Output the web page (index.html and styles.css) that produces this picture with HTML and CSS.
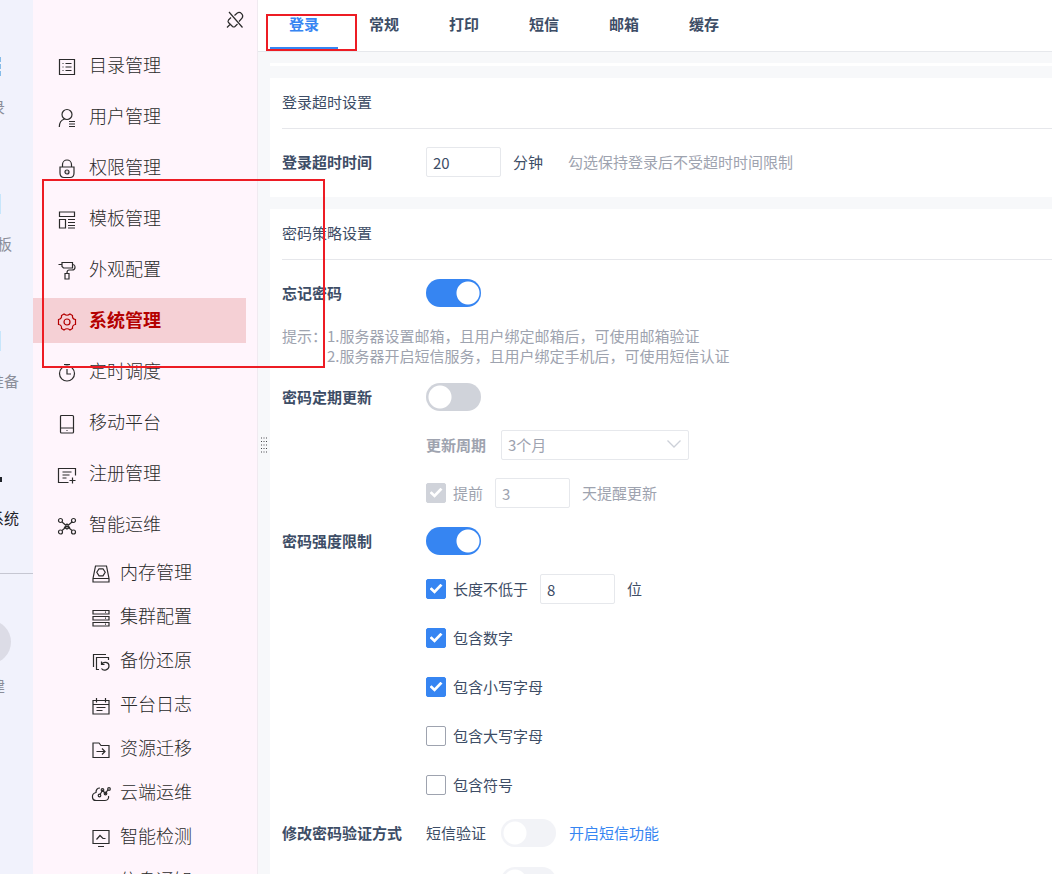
FILE: index.html
```
<!DOCTYPE html>
<html lang="zh-CN">
<head>
<meta charset="utf-8">
<title>系统管理</title>
<link rel="stylesheet" href="styles.css">
</head>
<body>
<div class="app">
  <aside class="rail">
    <a class="rail-item short" href="#"><i class="rail-icon"></i><span>录</span></a>
    <a class="rail-item medium" href="#"><i class="rail-icon pale"></i><span>板</span></a>
    <a class="rail-item" href="#"><i class="rail-icon pale"></i><span>准备</span></a>
    <a class="rail-item current" href="#"><i class="rail-icon dark"></i><span>系统</span></a>
    <hr class="rail-line">
    <a class="rail-item create short" href="#"><i class="rail-circle"></i><span>建</span></a>
  </aside>

  <nav class="sidebar">
    <div class="sidebar-top">
      <button class="pin" type="button" aria-label="取消固定">
        <svg class="icon" viewBox="0 0 20 20"><path d="M4 2 17.500 17.500M9.500 5.500 12 3.200a3.600 3.600 0 0 1 5 5L14 11.500M6 7.500 3.500 10a2 2 0 0 0 0 2.500L7.500 16.500a2 2 0 0 0 2.500 0L12.500 14M5 14.500 2 17.500"/></svg>
      </button>
    </div>
    <ul class="menu">
      <li><a class="item" href="#"><svg class="icon" viewBox="0 0 20 20"><path d="M2.500 2.500h15v15h-15zM5.500 6.500h1M5.500 10h1M5.500 13.500h1M8.500 6.500h6M8.500 10h6M8.500 13.500h6"/></svg>目录管理</a></li>
      <li><a class="item" href="#"><svg class="icon" viewBox="0 0 20 20"><circle cx="10" cy="6.500" r="5"/><path d="M7.500 11C4 12 2.300 15 2.300 19M12 13.500h6M12 16h6M12 18.500h6"/></svg>用户管理</a></li>
      <li><a class="item" href="#"><svg class="icon" viewBox="0 0 20 20"><path d="M5.500 8V5.500a4.500 4.500 0 0 1 9 0V8M3 8h14v6c0 3-2 4.500-4 4.500H7c-2 0-4-1.500-4-4.500z"/><circle cx="10" cy="13" r="2"/><path d="M10 12.700v.6"/></svg>权限管理</a></li>
      <li><a class="item" href="#"><svg class="icon" viewBox="0 0 20 20"><path d="M2.500 2h15v4.500h-15zM2.500 9.500h6v8.500h-6zM11 9.500h7M11 12.500h7M11 15.500h7M11 18h7"/></svg>模板管理</a></li>
      <li><a class="item" href="#"><svg class="icon" viewBox="0 0 20 20"><path d="M1.500 3.500H5M5 1.500h10.500v5.500H6.500L5 5.500zM15.500 3.500c2.500 0 2.500 1 2.500 3s-1 2.500-3 2.500h-3c-1.500 0-2 .5-2 3M8 12.500h4V18H8z"/></svg>外观配置</a></li>
      <li><a class="item active" href="#" aria-current="page"><svg class="icon" viewBox="0 0 20 20"><path d="M7 2Q10 4.500 13 2L15.500 3.500Q15 7 18.500 7.500V12.500Q15 13 15.500 16.500L13 18Q10 15.500 7 18L4.500 16.500Q5 13 1.500 12.500V7.500Q5 7 4.500 3.500z"/><circle cx="10" cy="10" r="3"/></svg>系统管理</a></li>
      <li><a class="item" href="#"><svg class="icon" viewBox="0 0 20 20"><circle cx="10" cy="10.500" r="7.500"/><path d="M7 1.500h6M10 6v5h4"/></svg>定时调度</a></li>
      <li><a class="item" href="#"><svg class="icon" viewBox="0 0 20 20"><rect x="3.500" y="1.500" width="13" height="17.500" rx="1"/><path d="M3.500 14h13M9.500 16.500h1"/></svg>移动平台</a></li>
      <li><a class="item" href="#"><svg class="icon" viewBox="0 0 20 20"><path d="M18.500 10.500V3.500h-17v14h10M5.500 7h9M5.500 10h7M5.500 13h4M12.500 15.500h6M15.500 12.500v6"/></svg>注册管理</a></li>
      <li><a class="item" href="#"><svg class="icon" viewBox="0 0 20 20"><circle cx="3.500" cy="4.500" r="2"/><circle cx="16.500" cy="4.500" r="2"/><circle cx="3.500" cy="16" r="2"/><circle cx="16.500" cy="16" r="2"/><path d="m5 6 10 8.500M15 6 5 14.500M7.500 11.500 10 8l2.500 3.500L10 13z"/></svg>智能运维</a>
        <ul class="submenu">
          <li><a class="item sub" href="#"><svg class="icon" viewBox="0 0 20 20"><path d="M4.500 2h11l2.500 12.500V18H2v-3.500zM2 14.500h16"/><path d="M8 4.800h4l2.200 3.500L12 11.800H8L5.800 8.300z"/></svg>内存管理</a></li>
          <li><a class="item sub" href="#"><svg class="icon" viewBox="0 0 20 20"><path d="M2 2.500h16v3.500H2zM2 8.500h16V12H2zM2 14.500h16V18H2zM14 4.200h1M14 10.200h1M14 16.200h1"/></svg>集群配置</a></li>
          <li><a class="item sub" href="#"><svg class="icon" viewBox="0 0 20 20"><path d="M2.500 15V2.500H15M8 17.500H5.500V5.500h12V8M10.500 9.500v3h3M10.500 12.500c2-3.500 7.500-2.500 7.500 1.500 0 4-5.500 5.500-7.500 2.500"/></svg>备份还原</a></li>
          <li><a class="item sub" href="#"><svg class="icon" viewBox="0 0 20 20"><path d="M2 4.500h16V18H2zM2 8.500h16M5.500 2v4.500M14.500 2v4.500M5.500 11.500h9M5.500 14.500h6"/></svg>平台日志</a></li>
          <li><a class="item sub" href="#"><svg class="icon" viewBox="0 0 20 20"><path d="M2 17.500V3h6l2 2.500h8v12zM5.500 11.500H14M11 8.500l3 3-3 3"/></svg>资源迁移</a></li>
          <li><a class="item sub" href="#"><svg class="icon" viewBox="0 0 20 20"><path d="M9 4C6 4 5 6 5 8.500c-5 1-4.500 8 0 8h9c3 0 4-2.500 3.500-4.500M9 10.500l2.500-4 3 3 2.500-4"/><circle cx="8.500" cy="11.500" r="1.300"/><circle cx="11.500" cy="6" r="1.300"/><circle cx="14.500" cy="9.500" r="1.300"/><circle cx="18" cy="5" r="1.300"/></svg>云端运维</a></li>
          <li><a class="item sub" href="#"><svg class="icon" viewBox="0 0 20 20"><path d="M2 2.500h16v13H2zM7 18.500h6M5.500 11.500 9 7.500l3 3 2.500 0"/></svg>智能检测</a></li>
          <li><a class="item sub" href="#"><svg class="icon" viewBox="0 0 20 20"><path d="M2 2.500h16v13H2zM5.500 6.500h9"/></svg>信息通知</a></li>
        </ul>
      </li>
    </ul>
  </nav>

  <main class="main">
    <div class="tabs" role="tablist">
      <button class="tab selected" type="button" role="tab" aria-selected="true">登录</button>
      <button class="tab" type="button" role="tab">常规</button>
      <button class="tab" type="button" role="tab">打印</button>
      <button class="tab" type="button" role="tab">短信</button>
      <button class="tab" type="button" role="tab">邮箱</button>
      <button class="tab" type="button" role="tab">缓存</button>
    </div>
    <div class="workspace">
      <div class="splitter">
        <svg class="grip" viewBox="0 0 6 16"><path d="M.5 .5v15M3 .5v15M5.500 .5v15"/></svg>
      </div>
      <div class="content">
        <div class="card-end"></div>
        <section class="card">
          <h2 class="card-title">登录超时设置</h2>
          <div class="card-body">
            <div class="row">
              <label class="name" for="timeout">登录超时时间</label>
              <input class="text" id="timeout" type="text" value="20">
              <span class="unit">分钟</span>
              <span class="note">勾选保持登录后不受超时时间限制</span>
            </div>
          </div>
        </section>

        <section class="card">
          <h2 class="card-title">密码策略设置</h2>
          <div class="card-body">
            <div class="row">
              <label class="name" for="forgot">忘记密码</label>
              <input class="switch" id="forgot" type="checkbox" role="switch" checked>
            </div>
            <div class="tips">
              <span>提示：</span>
              <p>1.服务器设置邮箱，且用户绑定邮箱后，可使用邮箱验证<br>2.服务器开启短信服务，且用户绑定手机后，可使用短信认证</p>
            </div>
            <div class="row">
              <label class="name" for="update">密码定期更新</label>
              <input class="switch" id="update" type="checkbox" role="switch">
            </div>
            <div class="row indent">
              <label class="field-name" for="period">更新周期</label>
              <div class="select-wrap">
                <select class="select" id="period" disabled><option>3个月</option></select>
                <svg class="chevron" viewBox="0 0 14 8"><path d="m.5.5 6.500 6.500L13.500.5"/></svg>
              </div>
            </div>
            <div class="row indent muted">
              <input class="check" id="remind" type="checkbox" checked disabled>
              <label for="remind">提前</label>
              <input class="text after-label" type="text" value="3" aria-label="提前天数" disabled>
              <span class="unit">天提醒更新</span>
            </div>
            <div class="row">
              <label class="name" for="strength">密码强度限制</label>
              <input class="switch" id="strength" type="checkbox" role="switch" checked>
            </div>
            <div class="rules">
              <div class="row indent">
                <input class="check" id="length" type="checkbox" checked>
                <label for="length">长度不低于</label>
                <input class="text after-label" type="text" value="8" aria-label="最小长度">
                <span class="unit">位</span>
              </div>
              <div class="row indent"><input class="check" id="digit" type="checkbox" checked><label for="digit">包含数字</label></div>
              <div class="row indent"><input class="check" id="lower" type="checkbox" checked><label for="lower">包含小写字母</label></div>
              <div class="row indent"><input class="check" id="upper" type="checkbox"><label for="upper">包含大写字母</label></div>
              <div class="row indent"><input class="check" id="symbol" type="checkbox"><label for="symbol">包含符号</label></div>
            </div>
            <div class="row">
              <span class="name">修改密码验证方式</span>
              <label class="method" for="sms">短信验证</label>
              <input class="switch" id="sms" type="checkbox" role="switch" disabled>
              <a class="link" href="#">开启短信功能</a>
            </div>
            <div class="row indent">
              <span class="method"></span>
              <input class="switch" type="checkbox" role="switch" aria-label="其他验证" disabled>
            </div>
          </div>
        </section>
      </div>
    </div>
  </main>

  <div class="mark mark-tab"></div>
  <div class="mark mark-menu"></div>
</div>
</body>
</html>
```
FILE: styles.css
```
* { box-sizing: border-box; }

body {
  margin: 0;
  color: #3d4d66;
  font: 15px/20px "Noto Sans CJK SC", "Noto Sans", sans-serif;
}

a { color: inherit; text-decoration: none; }
ul { margin: 0; padding: 0; list-style: none; }
button { padding: 0; border: 0; background: none; color: inherit; font: inherit; }

.app {
  position: relative;
  display: flex;
  height: 100vh;
  overflow: hidden;
  background: #fff;
}

/* Product rail */
.rail {
  flex: none;
  width: 33px;
  padding-top: 57px;
  overflow: hidden;
  background: #f1f2fc;
  color: #8b8e99;
}
.rail-item {
  display: flex;
  flex-direction: column;
  align-items: flex-end;
  gap: 20px;
  height: 137px;
  padding-right: 14px;
  white-space: nowrap;
}
.rail-item.short { padding-right: 28px; }
.rail-item.medium { padding-right: 21px; }
.rail-item.current { height: 105px; color: #1f2329; }
.rail-icon {
  align-self: flex-start;
  width: 1px;
  height: 20px;
  background: repeating-linear-gradient(#86bce8 0 5px, #f1f2fc 5px 7px);
}
.rail-icon.pale { background: #c7e6fb; }
.rail-icon.dark { width: 2px; height: 5px; margin: 9px 0 6px; background: #1f2329; }
.rail-line { margin: 0; border: 0; border-top: 1px solid #c6c7d2; }
.rail-item.create { gap: 12px; height: auto; padding-top: 46px; }
.rail-circle {
  align-self: flex-start;
  width: 44px;
  height: 44px;
  margin-left: -33px;
  border-radius: 50%;
  background: #dcdce6;
}

/* Management menu */
.sidebar {
  flex: none;
  width: 225px;
  border-right: 1px solid #f0eaf0;
  background: #fff5fc;
  color: #2b2b2b;
  font-size: 18px;
  font-weight: 300;
}
.sidebar-top {
  display: flex;
  justify-content: flex-end;
  height: 43px;
  padding: 10px 12px 0 0;
}
.pin { width: 20px; height: 20px; }
.icon {
  display: block;
  flex: none;
  width: 20px;
  height: 20px;
  fill: none;
  stroke: currentColor;
  stroke-width: 1.2;
}
.menu, .submenu { display: flex; flex-direction: column; gap: 6px; }
.submenu { padding-top: 6px; }
.item {
  display: flex;
  align-items: center;
  gap: 12px;
  height: 45px;
  margin-right: 11px;
  padding: 0 0 4px 24px;
}
.item .icon { margin-top: 6px; }
.item.sub { gap: 9px; height: 38px; padding: 0 0 3px 58px; }
.item.active { background: #f5d0d5; color: #b40000; font-weight: 700; }

/* Settings area */
.main { display: flex; flex: 1; flex-direction: column; min-width: 0; }
.tabs {
  display: flex;
  flex: none;
  gap: 12px;
  height: 52px;
  padding-left: 12px;
  border-bottom: 1px solid #e6e8ec;
}
.tab {
  height: 50px;
  padding: 0 19px;
  border-bottom: 3px solid transparent;
  font-weight: 700;
}
.tab.selected { border-color: #3685f2; color: #3685f2; }
.workspace { display: flex; flex: 1; min-height: 0; background: #f7f8fa; }
.splitter {
  display: flex;
  flex: none;
  align-items: center;
  justify-content: center;
  width: 12px;
  padding-bottom: 37px;
}
.grip { width: 6px; height: 16px; fill: none; stroke: #44454b; stroke-width: 1; stroke-dasharray: 1 2.500; }
.content {
  display: flex;
  flex: 1;
  flex-direction: column;
  gap: 12px;
  min-width: 0;
  padding-top: 11px;
  overflow: hidden;
}
.card-end { flex: none; height: 3px; background: #fff; }
.card { flex: none; padding-left: 12px; background: #fff; }
.card-title {
  margin: 0;
  padding: 14px 0 16px;
  border-bottom: 1px solid #e6e7eb;
  font-size: 15px;
  font-weight: 400;
}
.card-body { display: flex; flex-direction: column; gap: 18px; padding: 18px 0 20px; }
.row { display: flex; align-items: center; height: 30px; }
.row.indent { padding-left: 144px; }
.name { flex: none; width: 144px; font-weight: 700; }
.unit { margin-left: 12px; }
.note { margin-left: 25px; color: #9ea3af; }
.text {
  width: 75px;
  height: 30px;
  padding: 0 6px;
  border: 1px solid #e6e8ec;
  border-radius: 2px;
  background: #fff;
  color: #3d4d66;
  font: inherit;
}
.text.after-label { margin-left: 12px; }
.text:disabled { color: #9ea3af; }
.muted { color: #9ea3af; }

.switch {
  flex: none;
  width: 55px;
  height: 28px;
  margin: 0;
  appearance: none;
  border-radius: 14px;
  background: radial-gradient(circle at 14px 14px, #fff 11px, transparent 12px) #d0d3da;
}
.switch:checked { background: radial-gradient(circle at 42px 14px, #fff 11px, transparent 12px) #3685f2; }
.switch:disabled { background-color: #f2f3f7; }

.tips { display: flex; height: 38px; color: #9ea3af; }
.tips p { margin: 0; }

.field-name { width: 75px; color: #9ea3af; font-weight: 700; }
.select-wrap { position: relative; width: 188px; }
.select {
  display: block;
  width: 100%;
  height: 30px;
  padding: 0 6px;
  appearance: none;
  border: 1px solid #e6e8ec;
  border-radius: 2px;
  background: #fff;
  color: #9ea3af;
  font: inherit;
  opacity: 1;
}
.chevron {
  position: absolute;
  top: 10px;
  right: 8px;
  width: 14px;
  height: 8px;
  fill: none;
  stroke: #ccd0d8;
  stroke-width: 1.3;
}

.check {
  flex: none;
  width: 20px;
  height: 20px;
  margin: 0 7px 0 0;
  appearance: none;
  border: 1px solid #9ea3af;
  border-radius: 2px;
  background: #fff;
}
.check:checked {
  display: grid;
  place-items: center;
  border-color: #3685f2;
  background: #3685f2;
}
.check:checked::before {
  content: "";
  width: 13px;
  height: 11px;
  background: #fff;
  clip-path: polygon(0 50%, 16% 34%, 38% 58%, 84% 2%, 100% 18%, 39% 94%);
}
.check:checked:disabled { border-color: #d0d3da; background: #d0d3da; }
.rules { display: flex; flex-direction: column; gap: 19px; }
.method { width: 75px; }
.link { margin-left: 13px; color: #3685f2; }

/* Highlight frames */
.mark { position: absolute; border: 2px solid #ed1c24; pointer-events: none; }
.mark-tab { top: 14px; left: 266px; width: 91px; height: 37px; }
.mark-menu { top: 179px; left: 42px; width: 283px; height: 189px; }
```
